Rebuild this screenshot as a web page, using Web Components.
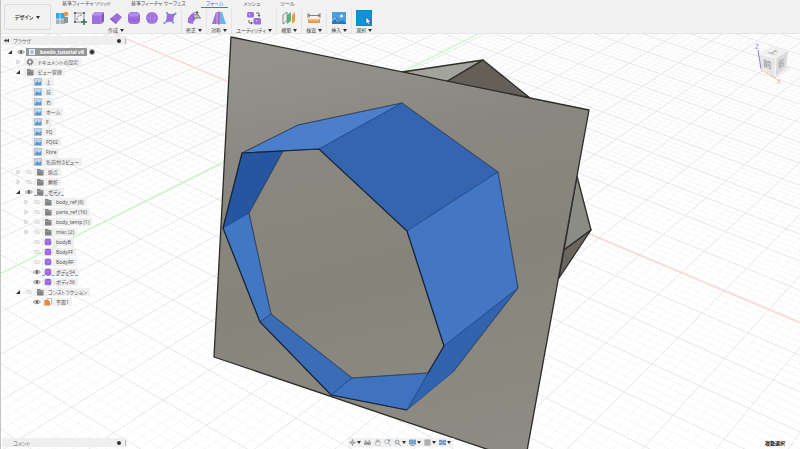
<!DOCTYPE html>
<html lang="ja">
<head>
<meta charset="utf-8">
<meta name="viewport" content="width=device-width, initial-scale=1">
<title>beetle_tutorial v8</title>
<style>
html, body { margin: 0; height: 100%; }
body { overflow: hidden; background: #fff; color: #555; font: 5px/8px "Noto Sans", "Noto Sans CJK JP", sans-serif; font-feature-settings: "palt"; }
</style>
</head>
<body>
<cad-app></cad-app>
<script>
const svg = (box, inner) => `<svg viewBox="0 0 ${box} ${box}" aria-hidden="true">${inner}</svg>`;
const P = '#9d6fdc', PD = '#8054c6', PL = '#b58ceb';
const ICONS = {
  sketch: svg(14, `<path d="M1 3h9v10H1z" fill="#a9b1b7"/><path d="M1 2h8v6H1z" fill="#38a3e0"/><path d="M5 2v11M1 8h8" stroke="#e6f3fa" stroke-width=".7"/><path d="M9 6h4v6H9z" fill="#8b9399"/><circle cx="11" cy="3" r="2" fill="#e8963e"/><path d="M11 0v6M8 3h6M9 1l4 4M13 1L9 5" stroke="#e8963e" stroke-width=".6"/>`),
  edit: svg(14, `<path d="M2 2h9v9H2z" fill="none" stroke="#777" stroke-width=".8"/><path d="M4 9c0-4 2-5 5-5" fill="none" stroke="#666" stroke-width=".8" stroke-dasharray="2 1"/><path d="M1 1h2v2H1zM10 1h2v2h-2zM1 10h2v2H1z" fill="#666"/><path d="M11 8v6M8 11h6" stroke="#2d7a4b" stroke-width="1.500"/>`),
  box: svg(14, `<path d="M1 4l3-3h9v9l-3 3H1z" fill="${P}"/><path d="M1 4l3-3h9l-3 3z" fill="${PL}"/><path d="M10 4l3-3v9l-3 3z" fill="${PD}"/><path d="M1 4h9v9M10 4l3-3" fill="none" stroke="#c9aaf3" stroke-width=".6"/>`),
  plane: svg(14, `<path d="M1 8l7-6 5 4-6 7z" fill="${P}"/><path d="M1 8l6 5v-1L2 7z" fill="${PD}"/>`),
  cylinder: svg(14, `<rect x="1" y="1" width="12" height="12" rx="4" fill="${P}"/><ellipse cx="7" cy="3.500" rx="5.500" ry="2" fill="${PL}"/><path d="M1 8q6 3 12 0" stroke="${PD}" stroke-width=".6" fill="none"/>`),
  sphere: svg(14, `<circle cx="7" cy="7" r="6" fill="${P}"/><path d="M7 1q-4 6 0 12M7 1q5 6 0 12M1 6q6 3 12 0" stroke="#bd98ed" stroke-width=".6" fill="none"/>`),
  face: svg(14, `<path d="M4 2q4 2 9 0-3 4-3 9-4-1-8 1 2-4 2-10z" fill="${P}"/><circle cx="4" cy="2" r="1" fill="#3aa0e0"/><circle cx="12.500" cy="2.500" r="1" fill="#3aa0e0"/><circle cx="10" cy="11.500" r="1" fill="#3aa0e0"/><circle cx="1.500" cy="12" r="1" fill="#3aa0e0"/>`),
  modify: svg(14, `<path d="M1 12c-1-5 2-9 7-11l-1 5 2 2c-2 1-3 3-3 5z" fill="${P}"/><path d="M6 7l4-5 3 5M10 2v5M7 7h7" fill="none" stroke="#666" stroke-width=".9"/><path d="M10 0l2 2h-4z" fill="#555"/>`),
  symmetry: svg(14, `<path d="M4 1h3v12H0z" fill="${P}"/><path d="M7 1h3l4 12H7z" fill="#69b5e8"/><path d="M7 0v14" stroke="#e05252" stroke-width=".8"/><path d="M4 1h2v12H4z" fill="${PL}"/>`),
  utility: svg(14, `<rect x="0" y="1" width="7" height="5.500" rx="1.500" fill="${P}"/><rect x="6.500" y="7" width="7.500" height="6.500" rx="1.500" fill="${P}"/><circle cx="2.500" cy="3.500" r=".7" fill="#e8dbfa"/><circle cx="9.500" cy="10" r=".7" fill="#e8dbfa"/><path d="M9 2h3v2M2 9v3h3" fill="none" stroke="#555" stroke-width=".8"/><path d="M10.500 4h3L12 6zM4 10.500v3L6 12z" fill="#555"/>`),
  construct: svg(14, `<path d="M1 4l4-3v9l-4 3z" fill="#eee" stroke="#777" stroke-width=".8"/><path d="M5 4l4-3v9l-4 3z" fill="#56b18b"/><path d="M10 4l3-3v9l-3 3z" fill="#e79a50"/>`),
  measure: svg(14, `<path d="M1 2v5M13 2v5M1 4.500h12" stroke="#777" stroke-width=".9"/><path d="M3 3L1 4.500 3 6M11 3l2 1.500L11 6" fill="none" stroke="#777" stroke-width=".8"/><path d="M1 8h12v4H1z" fill="#e59a4c"/><path d="M3 8v2M5 8v2M7 8v2M9 8v2M11 8v2" stroke="#fff" stroke-width=".6"/>`),
  insert: svg(14, `<path d="M0 1h14v12H0z" fill="#4b9fdc"/><circle cx="9.500" cy="5" r="1.500" fill="#f3f8fc"/><path d="M0 11l4-5 4 5 2-2 4 3v1H0z" fill="#2d76b5"/><path d="M0 10l3-3 3 4" fill="none" stroke="#d5ecf9" stroke-width=".7"/>`),
  select: svg(16, `<path d="M0 0h16v16H0z" fill="#0a95d6"/><path d="M.5.5h15v15H.5z" fill="none" stroke="#0679b4" stroke-width=".6" stroke-dasharray="2 1"/><path d="M10 7v7l1.500-1.200 1 2 1.200-.6-1-2H15z" fill="#fff" stroke="#333" stroke-width=".5"/>`),
  folder: svg(8, `<path d="M1 1h3l1 1h2.500v5.500H1z" fill="#858585"/><path d="M1 3.200h6.500" stroke="#c4c4c4" stroke-width=".5"/><path d="M3 3.500v4M5 3.500v4" stroke="#777" stroke-width=".4"/>`),
  gear: svg(8, `<circle cx="4" cy="4" r="2.100" fill="none" stroke="#777" stroke-width="1.300"/><circle cx="4" cy="4" r="3.100" fill="none" stroke="#777" stroke-width="1" stroke-dasharray="1.200 1.200"/>`),
  view: svg(8, `<path d="M.5.5h7v7h-7z" fill="#c6d8e9"/><path d="M1 6l2-3 2 2 2-2v4H1z" fill="#5c97cf"/><path d="M.5.5h7v7h-7z" fill="none" stroke="#9cb2c6" stroke-width=".7"/>`),
  body: svg(8, `<rect x=".8" y=".8" width="6.400" height="6.400" rx="1.700" fill="#9461d6"/><path d="M1 2.500l3 1 3-1M4 3.500V7" fill="none" stroke="#c5a3f0" stroke-width=".6"/>`),
  workplane: svg(8, `<path d="M3 .5h4.500V6H3z" fill="#fff" stroke="#999" stroke-width=".6"/><path d="M.5 2h4L6 4v3.500H.5z" fill="#e5893a"/>`),
  doc: svg(8, `<path d="M1 1h6v6H1z" fill="#eef2f6"/><path d="M2 3h4M2 5h4M4 2v4" stroke="#8298b0" stroke-width=".7"/>`),
  eye: svg(8, `<path d="M.5 4Q4 .5 7.500 4 4 7.500.5 4z" fill="#fff" stroke="#777" stroke-width=".8"/><circle cx="4" cy="4" r="1.400" fill="#666"/>`),
  eyeoff: svg(8, `<path d="M.5 4Q4 .5 7.500 4 4 7.500.5 4z" fill="#f6f6f6" stroke="#d0d0d0" stroke-width=".7"/><path d="M1.500 2l5 4" stroke="#d0d0d0" stroke-width=".7"/>`),
  open: svg(8, `<path d="M6 2v4H2z" fill="#333"/>`),
  closed: svg(8, `<path d="M3 2l3 2-3 2z" fill="#fff" stroke="#aaa" stroke-width=".6"/>`),
  none: '',
  orbit: svg(8, `<path d="M4 0v8M0 4h8" stroke="#999" stroke-width=".9"/><circle cx="4" cy="4" r="2" fill="#bbb" stroke="#888" stroke-width=".7"/>`),
  lookat: svg(8, `<path d="M0 3h8v4H0z" fill="#aaa"/><path d="M2 1v2M6 1v2M2 5h4" stroke="#777" stroke-width=".9"/>`),
  pan: svg(8, `<path d="M2 7L.7 4l1-.3L2.500 5V1.500h1V4 .8h1V4l.2-2.700h1V4l.4-1.500h.9L6.500 7z" fill="#fff" stroke="#999" stroke-width=".6"/>`),
  zoom: svg(8, `<circle cx="3" cy="3" r="2.200" fill="#fff" stroke="#999" stroke-width=".8"/><path d="M5 5l2.500 2.500M6 0v4M4.500 1.500h3" stroke="#888" stroke-width=".8"/>`),
  fit: svg(8, `<circle cx="3.500" cy="3.500" r="2.300" fill="#cfdde8" stroke="#888" stroke-width=".8"/><path d="M5 5l2.500 2.500" stroke="#777" stroke-width="1"/>`),
  display: svg(8, `<path d="M0 1h8v5H0z" fill="#71a6d6" stroke="#8a98a5" stroke-width=".6"/><path d="M2 7.500h4" stroke="#888" stroke-width=".9"/>`),
  grid: svg(8, `<path d="M.5.5h7v7h-7z" fill="#a9a9a9"/><path d="M.5 3h7M.5 5h7" stroke="#ccc" stroke-width=".5"/>`),
  panes: svg(8, `<path d="M0 1h8v6H0z" fill="#6a9bd0"/><path d="M4 1v6M0 4h8" stroke="#e9eef4" stroke-width=".7"/><path d="M3 3h2v2H3z" fill="#c66"/>`)
};
const RESET = `<style>
  * { box-sizing: border-box; }
  button { all: unset; box-sizing: border-box; cursor: pointer; }
  button:focus-visible { outline: 1px solid #0a95d6; }
  svg { display: block; width: 100%; height: 100%; }
</style>`;
class Base extends HTMLElement {
  connectedCallback() {
    if (!this.shadowRoot) this.attachShadow({ mode: 'open' }).innerHTML = RESET + this.view();
  }
  a(name, fallback = '') { return this.getAttribute(name) ?? fallback; }
}

customElements.define('cad-icon', class extends Base {
  view() { return `<style>:host { display: block; flex: none; width: var(--icon, 8px); height: var(--icon, 8px); }</style>${ICONS[this.a('name')] || ''}`; }
});

customElements.define('tool-tab', class extends Base {
  view() { return `<style>
    :host { display: block; }
    button { height: 8px; padding: 0 5px; border-bottom: 1px solid transparent; line-height: 7px; white-space: nowrap; display: block; }
    :host([active]) button { color: #168fd0; border-bottom-color: #168fd0; }
  </style><button role="tab" aria-selected="${this.hasAttribute('active')}"><slot></slot></button>`; }
});

customElements.define('tool-group', class extends Base {
  view() { return `<style>
    :host { display: flex; flex-direction: column; align-items: center; padding: 0 4px; border-right: 1px solid #e4e4e4; }
    :host(:last-of-type) { border-right: 0; }
    .icons { display: flex; gap: 4px; height: 17px; align-items: center; --icon: 14px; }
    :host([big]) .icons { --icon: 16px; }
    .label { display: flex; align-items: center; gap: 2px; white-space: nowrap; color: #444; }
    .label::after { content: ""; border: 2px solid transparent; border-top: 3px solid #333; border-bottom: 0; }
  </style><div class="icons">${this.a('icons').split(' ').map(n => `<button aria-label="${n}"><cad-icon name="${n}"></cad-icon></button>`).join('')}</div>
  <button class="label"><slot></slot></button>`; }
});

customElements.define('tool-bar', class extends Base {
  view() { return `<style>
    :host { display: flex; height: 34px; padding-left: 3px; background: #f2f2f2; border-bottom: 1px solid #e6e6e6; }
    .mode { width: 47px; height: 26px; margin-top: 4px; border: 1px solid #dcdcdc; border-radius: 2px; display: flex; align-items: center; justify-content: center; gap: 3px; color: #333; font-weight: 600; }
    .mode::after { content: ""; border: 2px solid transparent; border-top: 3px solid #333; border-bottom: 0; }
    .tabs { display: flex; gap: 10px; padding-left: 6px; }
    .groups { display: flex; padding-top: 1px; }
  </style>
  <button class="mode">デザイン</button>
  <div><div class="tabs" role="tablist"><tool-tab>基準フィーチャ ソリッド</tool-tab><tool-tab>基準フィーチャ サーフェス</tool-tab><tool-tab active>フォーム</tool-tab><tool-tab>メッシュ</tool-tab><tool-tab>ツール</tool-tab></div>
  <div class="groups">
    <tool-group icons="sketch edit box plane cylinder sphere face">作成</tool-group><tool-group icons="modify">修正</tool-group><tool-group icons="symmetry">対称</tool-group><tool-group icons="utility">ユーティリティ</tool-group><tool-group icons="construct">構築</tool-group><tool-group icons="measure">検査</tool-group><tool-group icons="insert">挿入</tool-group><tool-group icons="select" big>選択</tool-group>
  </div></div>`; }
});

customElements.define('panel-bar', class extends Base {
  view() { return `<style>
    :host { display: flex; align-items: center; width: 125px; height: 9px; padding: 0 1px 0 2px; gap: 4px; background: #efefef; color: #666; }
    .fold { width: 5px; height: 5px; }
    .fold svg { visibility: hidden; }
    :host([fold]) .fold svg { visibility: visible; }
    .dot { width: 4px; height: 4px; border-radius: 2px; background: #333; }
    .grip { width: 1px; height: 6px; background: #bbb; }
    span { flex: 1; }
  </style><button class="fold" aria-label="fold">${svg(8, '<path d="M4 1v6L0 4zM8 1v6L4 4z" fill="#333"/>')}</button><span><slot></slot></span><button class="dot" aria-label="options"></button><div class="grip"></div>`; }
});

customElements.define('tree-row', class extends Base {
  view() {
    const eye = this.a('eye');
    return `<style>
    :host { display: flex; align-items: center; height: 10px; padding-left: calc(4px + 8px * ${this.a('depth', '1')}); }
    .twist { width: 8px; height: 8px; margin-right: 2px; }
    .eye { width: 10px; height: 8px; padding: 0 1px; }
    .chip { display: flex; align-items: center; gap: 4px; height: 8px; padding: 0 3px 0 2px; background: #f0f0f0; white-space: nowrap; }
    :host([dashed]) .chip { border-bottom: 1px dashed #7e9cc4; }
    :host([root]) .chip { background: #979797; color: #fff; font-weight: 700; }
    .radio { appearance: none; width: 6px; height: 6px; margin: 0 0 0 2px; border: 1px solid #aaa; border-radius: 3px; background: #333; }
    </style><button class="twist" aria-label="toggle"><cad-icon name="${this.a('twist', 'none')}"></cad-icon></button>
    ${eye ? `<button class="eye" aria-label="visibility"><cad-icon name="${eye}"></cad-icon></button>` : ''}
    <button class="chip"><cad-icon name="${this.a('icon')}"></cad-icon><slot></slot></button>
    ${this.hasAttribute('root') ? '<input class="radio" type="radio" checked aria-label="active component">' : ''}`;
  }
});

const VIEWS = ['上', '前', '右', 'ホーム', 'F', 'FQ', 'FQ02', 'Ftire', '名前付きビュー'];
const row = (depth, twist, eye, icon, text, extra = '') => `<tree-row depth="${depth}" twist="${twist}" eye="${eye}" icon="${icon}" ${extra}>${text}</tree-row>`;
customElements.define('model-tree', class extends Base {
  view() { return `<style>:host { display: block; padding-top: 2px; }</style>` + [
    row(0, 'open', 'eye', 'doc', 'beetle_tutorial v8', 'root'),
    row(1, 'closed', '', 'gear', 'ドキュメントの設定'),
    row(1, 'open', '', 'folder', 'ビュー管理'),
    ...VIEWS.map(v => row(2, 'none', '', 'view', v)),
    row(1, 'closed', 'eyeoff', 'folder', '原点'),
    row(1, 'closed', 'eyeoff', 'folder', '解析'),
    row(1, 'open', 'eye', 'folder', 'ボディ', 'dashed'),
    ...['body_ref (6)', 'parts_ref (16)', 'body_temp (1)', 'misc (2)'].map(v => row(2, 'closed', 'eyeoff', 'folder', v)),
    ...['bodyB', 'BodyFF', 'BodyRF'].map(v => row(2, 'none', 'eyeoff', 'body', v)),
    row(2, 'none', 'eye', 'body', 'ボディ34', 'dashed'),
    row(2, 'none', 'eye', 'body', 'ボディ36'),
    row(1, 'open', 'eyeoff', 'folder', 'コンストラクション'),
    row(2, 'none', 'eye', 'workplane', '平面1')
  ].join(''); }
});

customElements.define('nav-bar', class extends Base {
  view() {
    const item = (n, menu) => `<button class="${menu ? 'menu' : ''}" aria-label="${n}"><cad-icon name="${n}"></cad-icon></button>`;
    return `<style>
    :host { display: flex; align-items: center; gap: 3px; height: 9px; padding: 0 3px 0 1px; background: #f2f2f2; }
    button { display: flex; align-items: center; gap: 1px; --icon: 7px; }
    .menu::after { content: ""; border: 2px solid transparent; border-top: 3px solid #333; border-bottom: 0; }
    </style>${item('orbit', 1)}${item('lookat')}${item('pan')}${item('zoom')}${item('fit', 1)}${item('display', 1)}${item('grid', 1)}${item('panes', 1)}`;
  }
});

customElements.define('view-cube', class extends Base {
  view() { return `<style>
    :host { display: block; width: 40px; height: 44px; }
    text { font-size: 9px; font-weight: 700; fill: #a4a6a8; }
    .axis { font-size: 7px; font-weight: 400; }
  </style><svg viewBox="0 0 40 44" role="img" aria-label="view cube">
    <path d="M8 29l12 8 15-10-3-4z" fill="#eee"/>
    <path d="M4 12l14-8 15 4-2 17-11 10-14-9z" fill="#e6e6e6"/>
    <path d="M4 12l14-8 15 4-12 8z" fill="#f0f0f0"/><path d="M21 16l12-8-2 17-11 10z" fill="#d9dadb"/>
    <path d="M4 12l17 4 12-8M21 16l-1 19" fill="none" stroke="#fafafa"/>
    <text transform="matrix(.9 .25 -.7 .5 18 10)" x="-4" y="3">上</text>
    <text transform="matrix(.95 .35 0 1 8 24)">前</text>
    <text transform="matrix(.7 -.5 0 1 23 27)">右</text>
    <path d="M3 8l3 19" stroke="#8c7cf0" fill="none"/><path d="M6 28l16 9" stroke="#f1a477" stroke-width="1" stroke-dasharray="2 1"/>
    <text class="axis" x="0" y="7" style="fill:#8d8df2">Z</text><text class="axis" x="22" y="42" style="fill:#f5a078">X</text>
  </svg>`; }
});

// Ground grid in perspective: each axis runs from the origin to its vanishing point.
const ORIGIN = [315, 118], VX = [-2012, -859], VY = [1455, -446], CX = -0.01362, CY = -0.0258;
function gridPoint(i, j) {
  const w = 1 + CX * i + CY * j;
  return [0, 1].map(k => ((ORIGIN[k] + CX * i * VX[k] + CY * j * VY[k]) / w).toFixed(1)).join(' ');
}
function gridLines(step, skip) {
  let d = '';
  for (let n = -200; n <= 200; n++) {
    if (skip && n % 5 === 0) continue;
    const v = n * step;
    const jMax = (0.94 - -CX * v) / -CY, iMax = (0.94 - -CY * v) / -CX;
    if (v < 60) d += `M${gridPoint(v, -60)}L${gridPoint(v, jMax)}`;
    if (v < 32) d += `M${gridPoint(-80, v)}L${gridPoint(iMax, v)}`;
  }
  return d;
}
const poly = (points, fill) => `<polygon points="${points}" fill="${fill}"/>`;
customElements.define('model-scene', class extends Base {
  view() { return `<style>:host { display: block; min-width: 0; min-height: 0; overflow: hidden; }</style>
  <svg viewBox="0 0 800 449" preserveAspectRatio="xMidYMid slice" role="img" aria-label="model">
    <defs>
      <linearGradient id="plate" x1=".4" y1="0" x2=".6" y2="1"><stop offset="0" stop-color="#94938b"/><stop offset=".25" stop-color="#8a8780"/><stop offset=".55" stop-color="#86847a"/><stop offset="1" stop-color="#8e8b84"/></linearGradient>
    </defs>
    <rect width="800" height="449" fill="#fff"/>
    <path d="${gridLines(0.2, true)}" stroke="#f7f7f7" fill="none"/>
    <path d="${gridLines(1, false)}" stroke="#e7e7e7" fill="none"/>
    <path d="M115 34L800 323" stroke="#ffd3d3" stroke-width="1.200"/><path d="M0 274L478 34" stroke="#c6f7c6" stroke-width="1.200"/>
    <g stroke="#2c2c2a" stroke-width="1.300" stroke-linejoin="round">
      ${poly('402,72 483,60 446,82', '#a3a39e')}${poly('446,82 483,60 530,98', '#645f57')}
      ${poly('577,176 591,230 564,250', '#8b8c84')}${poly('564,250 591,230 559,278', '#6a665e')}
      ${poly('231,37 589,110 525,462 214,357', 'url(#plate)')}
    </g>
    <g stroke="#1d4687" stroke-width=".7" stroke-linejoin="round">
      ${poly('242,153 283,151 249,213 223,228', '#25569f')}
      ${poly('223,228 249,213 271,314 260,322', '#4277c3')}
      ${poly('260,322 271,314 352,378 331,395', '#3b6cb6')}
      ${poly('331,395 352,378 428,373 407,410', '#4073bf')}
      ${poly('242,153 298,125 402,103 319,149', '#4b7fcb')}
      ${poly('319,149 402,103 498,172 407,231', '#3565b0')}
      ${poly('407,231 498,172 518,288 444,346', '#4477c3')}
      ${poly('444,346 518,288 453,372 407,410', '#3263ae')}
    </g>
    <path d="M283 151L249 213 271 314 352 378 428 373M242 153L298 125 402 103 498 172 518 288 453 372" fill="none" stroke="#38414d" stroke-width=".7"/>
    <path d="M407 410L331 395 260 322 223 228 242 153 319 149 407 231 444 346 428 373" fill="none" stroke="#182231" stroke-width="1.200"/>
  </svg>`; }
});

customElements.define('cad-app', class extends Base {
  view() { return `<style>
    :host { display: grid; height: 100vh; grid-template: "all" minmax(0, 1fr) / minmax(0, 1fr); }
    model-scene, .ui { grid-area: all; }
    .ui { z-index: 1; display: flex; flex-direction: column; min-height: 0; border-left: 1px solid #c4c4c4; }
    .middle { flex: 1; min-height: 0; display: flex; justify-content: space-between; padding: 2px 5px 0 1px; }
    view-cube { margin-top: 6px; }
    footer { display: grid; grid-template-columns: 1fr auto 1fr; align-items: center; padding: 0 15px 2px 1px; }
    nav-bar { margin-left: 14px; }
    .status { justify-self: end; color: #222; font-weight: 700; }
  </style>
  <model-scene></model-scene>
  <div class="ui">
    <tool-bar></tool-bar>
    <div class="middle"><aside><panel-bar fold>ブラウザ</panel-bar><model-tree></model-tree></aside><view-cube></view-cube></div>
    <footer><panel-bar>コメント</panel-bar><nav-bar></nav-bar><span class="status">複数選択</span></footer>
  </div>`; }
});
</script>
</body>
</html>
